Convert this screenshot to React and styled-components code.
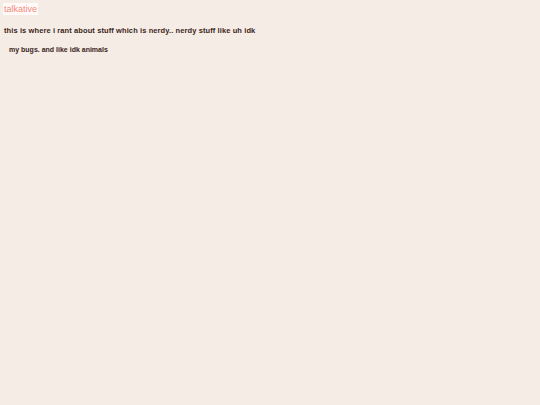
import React from 'react';
import styled, { createGlobalStyle } from 'styled-components';

const GlobalStyle = createGlobalStyle`
  html, body {
    margin: 0;
    padding: 0;
    background: #f5ece6;
  }
  body {
    font-family: 'Liberation Sans', Arial, sans-serif;
    color: #3b2519;
  }
`;

const Page = styled.div`
  min-height: 405px;
  padding: 3px 4px;
  box-sizing: border-box;
  font-size: 8px;
  line-height: 10px;
`;

const Badge = styled.div`
  width: fit-content;
  margin-left: -1px;
  background: #fffaf8;
  color: #f08a80;
  font-size: 9px;
  line-height: 12px;
  padding: 0 1px;
`;

const Line = styled.p`
  margin: ${p => p.$top}px 0 0 ${p => p.$indent}px;
  font-size: ${p => p.$size}px;
  font-weight: bold;
  line-height: 10px;
  letter-spacing: ${p => p.$spacing}px;
`;

export default function App() {
  return (
    <>
      <GlobalStyle />
      <Page>
        <Badge>talkative</Badge>
        <Line $top={11} $indent={0} $size={7.5} $spacing={0.1}>
          this is where i rant about stuff which is nerdy.. nerdy stuff like uh idk
        </Line>
        <Line $top={9} $indent={5} $size={7} $spacing={0}>
          my bugs. and like idk animals
        </Line>
      </Page>
    </>
  );
}
